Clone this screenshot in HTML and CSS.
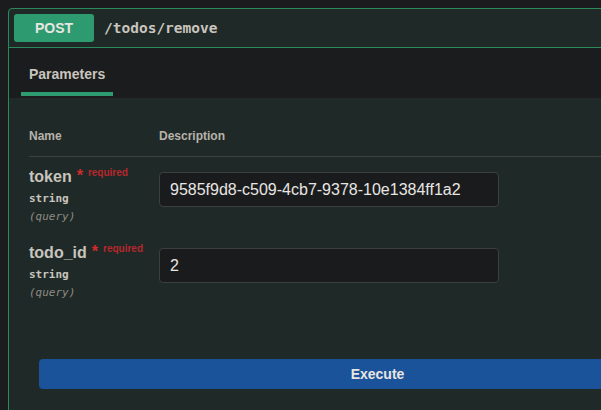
FILE: index.html
```html
<!DOCTYPE html>
<html>
<head>
<meta charset="utf-8">
<link rel="stylesheet" href="styles.css">
</head>
<body>
<div class="opblock">
  <div class="summary">
    <span class="method">POST</span>
    <span class="path">/todos/remove</span>
  </div>
  <div class="tabs">
    <div class="tab">Parameters</div>
  </div>
  <div class="section">
    <div class="params">
      <div class="param-head">
        <div class="col-name">Name</div>
        <div class="col-desc">Description</div>
      </div>
      <div class="param-row">
        <div class="col-name">
          <div class="pname">token<span class="star">*</span><span class="req">required</span></div>
          <div class="ptype">string</div>
          <div class="pin">(query)</div>
        </div>
        <div class="col-desc">
          <input class="pinput" type="text" value="9585f9d8-c509-4cb7-9378-10e1384ff1a2">
        </div>
      </div>
      <div class="param-row">
        <div class="col-name">
          <div class="pname">todo_id<span class="star">*</span><span class="req">required</span></div>
          <div class="ptype">string</div>
          <div class="pin">(query)</div>
        </div>
        <div class="col-desc">
          <input class="pinput" type="text" value="2">
        </div>
      </div>
    </div>
    <div class="exec-wrap">
      <button class="exec" type="button">Execute</button>
    </div>
  </div>
</div>
</body>
</html>
```

FILE: styles.css
```css
html, body {
  margin: 0;
}

body {
  background: #1b1c1e;
  padding: 8px 0 0 8px;
  height: 410px;
  box-sizing: border-box;
  overflow: hidden;
  font-family: "Liberation Sans", Arial, sans-serif;
}

.opblock {
  width: 737px;
  min-height: 420px;
  border: 1px solid #2b8a5b;
  border-radius: 4px;
  background: #1f2a28;
}

.summary {
  display: flex;
  align-items: center;
  height: 38px;
  padding: 0 5px;
  border-bottom: 1px solid #2b8a5b;
}

.method {
  width: 80px;
  height: 28px;
  border-radius: 3px;
  background: #2e9a6f;
  color: #e8e6e3;
  font-weight: 700;
  font-size: 14px;
  display: flex;
  align-items: center;
  justify-content: center;
}

.path {
  margin-left: 10px;
  font-family: "DejaVu Sans Mono", monospace;
  font-weight: 700;
  font-size: 14.5px;
  color: #c9c4bd;
}

.tabs {
  display: flex;
  height: 50px;
  padding-left: 12px;
  background: #1a1c1d;
}

.tab {
  box-sizing: border-box;
  height: 48px;
  padding: 17px 8px 0;
  line-height: 18px;
  font-size: 14px;
  font-weight: 700;
  color: #c9c4bd;
  border-bottom: 4px solid #2e9a6f;
}

.params {
  margin: 0 20px;
}

.param-head {
  display: flex;
  padding: 31px 0 13px;
  border-bottom: 1px solid #3b413e;
  font-size: 12px;
  line-height: 14px;
  font-weight: 700;
  color: #b8b2aa;
}

.col-name {
  width: 130px;
  flex: none;
}

.col-desc {
  flex: 1;
}

.param-row {
  display: flex;
  height: 76px;
}

.param-row .col-name {
  padding-top: 11px;
}

.param-row .col-desc {
  padding-top: 15px;
}

.pname {
  font-size: 16px;
  line-height: 18px;
  font-weight: 700;
  color: #c9c4bd;
  white-space: nowrap;
}

.star {
  color: #d42a2a;
  font-size: 16px;
  font-weight: 700;
  margin-left: 5px;
  position: relative;
  top: -1px;
}

.req {
  color: #b8262b;
  font-size: 10px;
  font-weight: 700;
  padding-left: 5px;
  position: relative;
  top: -6px;
}

.ptype {
  margin-top: 2px;
  font-family: "DejaVu Sans Mono", monospace;
  font-size: 11px;
  line-height: 18px;
  font-weight: 700;
  color: #c9c4bd;
}

.pin {
  font-family: "DejaVu Sans Mono", monospace;
  font-size: 11px;
  line-height: 18px;
  font-style: italic;
  color: #8f8a83;
}

.pinput {
  display: block;
  width: 340px;
  height: 35px;
  box-sizing: border-box;
  margin: 0;
  padding: 0 10px;
  background: #1a1b1d;
  border: 1px solid #3b3f40;
  border-radius: 4px;
  font-family: "Liberation Sans", Arial, sans-serif;
  font-size: 16px;
  color: #e8e6e3;
  outline: none;
}

.exec-wrap {
  padding: 50px 30px 0;
}

.exec {
  display: block;
  width: 100%;
  height: 30px;
  margin: 0;
  border: none;
  border-radius: 4px;
  background: #1a5399;
  color: #e8e6e3;
  font-family: "Liberation Sans", Arial, sans-serif;
  font-size: 14px;
  font-weight: 700;
}
```
